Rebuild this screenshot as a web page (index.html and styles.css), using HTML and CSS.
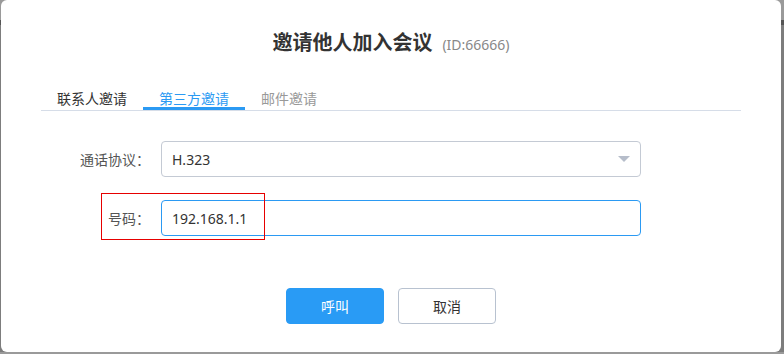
FILE: index.html
```html
<!DOCTYPE html>
<html lang="zh-CN">
<head>
<meta charset="utf-8">
<title>邀请他人加入会议</title>
<link rel="stylesheet" href="styles.css">
</head>
<body>
<div class="dialog">
  <div class="header">
    <span class="title">邀请他人加入会议</span>
    <span class="meeting-id">(ID:66666)</span>
  </div>
  <div class="tabs">
    <div class="tab">联系人邀请</div>
    <div class="tab active">第三方邀请</div>
    <div class="tab muted">邮件邀请</div>
  </div>
  <div class="form">
    <div class="row">
      <label class="label">通话协议：</label>
      <div class="control select">
        <span class="value">H.323</span>
        <span class="arrow"></span>
      </div>
    </div>
    <div class="row">
      <label class="label">号码：</label>
      <div class="control input focused">
        <span class="value">192.168.1.1</span>
      </div>
      <div class="annotation"></div>
    </div>
  </div>
  <div class="actions">
    <button class="btn primary">呼叫</button>
    <button class="btn">取消</button>
  </div>
</div>
</body>
</html>
```
FILE: styles.css
```css
html {
  background: #7d7d7d linear-gradient(to bottom, #9a9a9a 0, #9a9a9a 20px, #555 20px, #555 25px, #7d7d7d 25px);
}
body {
  margin: 0;
  font-family: "Noto Sans", "Noto Sans CJK SC", sans-serif;
  font-size: 14px;
  color: #333;
}
.dialog {
  margin-left: 1px;
  width: 780px;
  height: 352px;
  background: #fff;
  border-radius: 6px;
  box-sizing: border-box;
  padding-top: 28px;
  display: flex;
  flex-direction: column;
}
.header {
  display: flex;
  justify-content: center;
  align-items: baseline;
  gap: 10px;
  line-height: 28px;
  height: 28px;
}
.title {
  font-family: "Noto Sans CJK SC", sans-serif;
  font-size: 20px;
  font-weight: 700;
  color: #333;
}
.meeting-id {
  font-size: 14px;
  color: #888;
}
.tabs {
  margin: 32px 40px 0;
  display: flex;
  border-bottom: 1px solid #d6dde8;
  height: 22px;
}
.tab {
  font-family: "Noto Sans CJK SC", sans-serif;
  line-height: 20px;
  padding: 0 16px;
  border-bottom: 3px solid transparent;
  color: #333;
}
.tab.active {
  color: #2b9af3;
  border-bottom-color: #2b9af3;
}
.tab.muted {
  color: #999;
}
.form {
  margin-top: 30px;
  display: flex;
  flex-direction: column;
  gap: 23px;
}
.row {
  position: relative;
  display: flex;
  align-items: center;
}
.label {
  width: 149px;
  text-align: right;
  font-family: "Noto Sans CJK SC", sans-serif;
  color: #555;
  margin-right: 11px;
}
.control {
  width: 480px;
  height: 36px;
  box-sizing: border-box;
  border: 1px solid #c4cad4;
  border-radius: 4px;
  padding: 0 10px;
  display: flex;
  align-items: center;
  justify-content: space-between;
  color: #333;
}
.control.focused {
  border-color: #2b9af3;
}
.arrow {
  width: 0;
  height: 0;
  border-left: 6px solid transparent;
  border-right: 6px solid transparent;
  border-top: 6px solid #b6bdca;
  margin-right: 0;
}
.annotation {
  position: absolute;
  left: 100px;
  top: -7px;
  width: 164px;
  height: 47px;
  box-sizing: border-box;
  border: 1px solid #e60000;
  pointer-events: none;
}
.actions {
  margin-top: 52px;
  display: flex;
  justify-content: center;
  gap: 14px;
}
.btn {
  width: 98px;
  height: 36px;
  border-radius: 4px;
  border: 1px solid #b8c2d0;
  background: #fff;
  color: #333;
  font-family: "Noto Sans CJK SC", sans-serif;
  font-size: 14px;
  padding: 0;
}
.btn.primary {
  background: #299bf5;
  border-color: #299bf5;
  color: #fff;
}
```
